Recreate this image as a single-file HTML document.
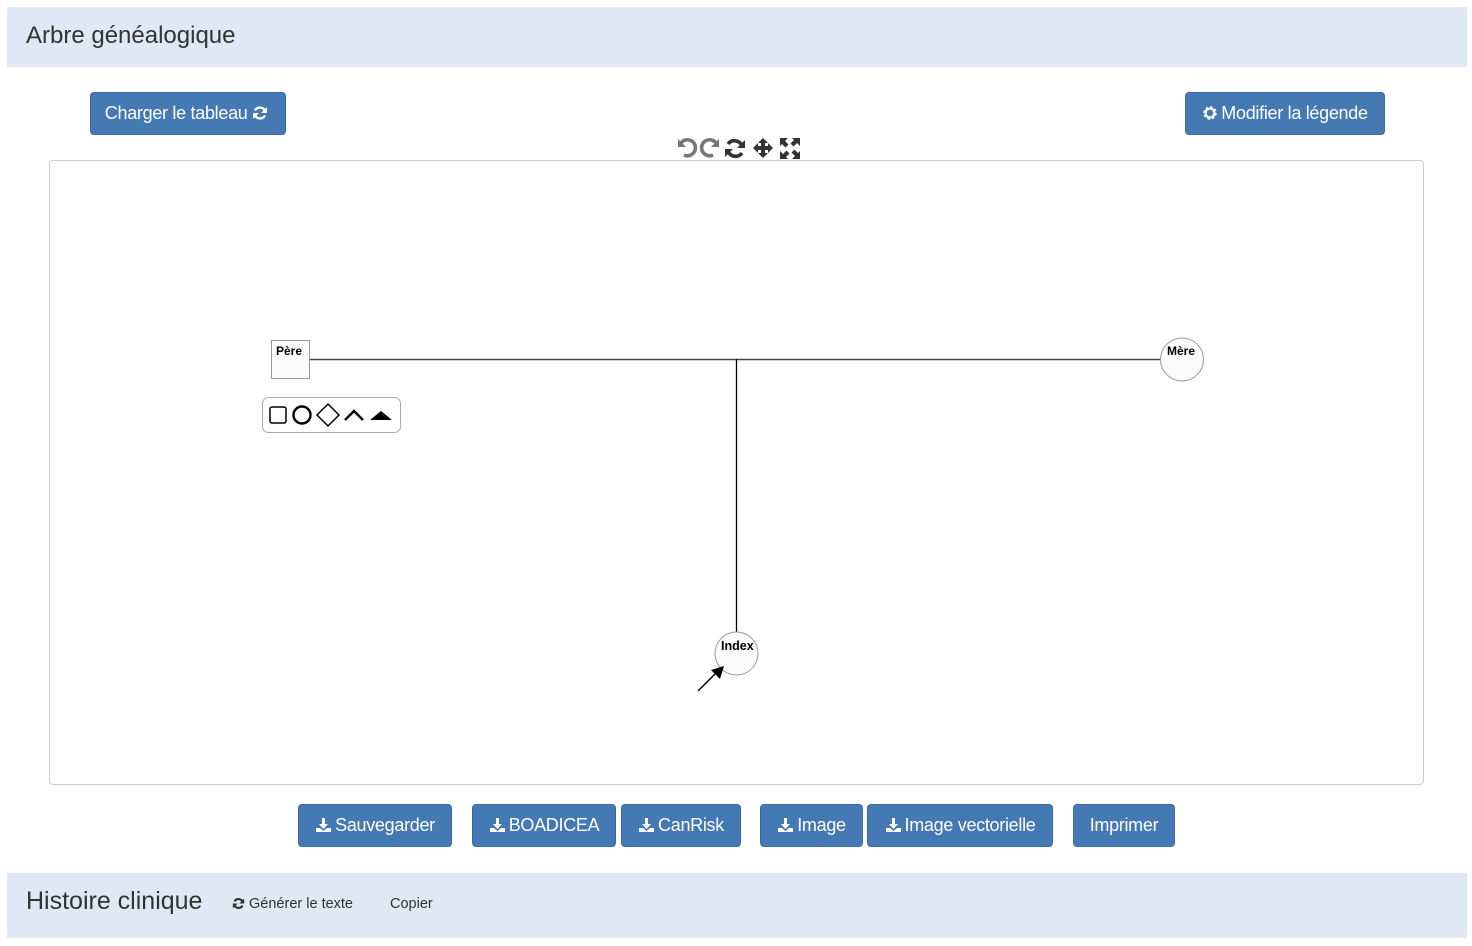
<!DOCTYPE html>
<html><head><meta charset="utf-8"><style>
body{margin:0;width:1472px;height:946px;background:#fff;font-family:"Liberation Sans",sans-serif;position:relative;overflow:hidden}
.abs{position:absolute}
.panel{position:absolute;left:7px;width:1460px;background:#dfe8f4;border-bottom:1px solid #e8e8e8}
.btn{position:absolute;height:43px;background:#4479b4;border:1px solid #3a6ba3;border-radius:4px;color:#fff;font-size:18px;line-height:41px;text-align:center;box-sizing:border-box;letter-spacing:-0.3px;white-space:nowrap}
.btn svg{vertical-align:-2px;margin-right:3px}
</style></head><body>
<div class="panel" style="top:7px;height:59px"><div class="abs" style="left:19px;top:15px;font-size:24px;color:#333">Arbre généalogique</div></div>

<div class="btn" style="left:90px;top:92px;width:196px">Charger le tableau <svg width="16" height="16" viewBox="0 0 16 16"><path d="M13 6A5.5 5.5 0 0 0 3 5.5M3 10a5.5 5.5 0 0 0 10 .5" fill="none" stroke="#fff" stroke-width="2.4"/><path d="M15 2v6H9zM1 14V8h6z" fill="#fff"/></svg></div>
<div class="btn" style="left:1185px;top:92px;width:200px"><svg width="16" height="16" viewBox="0 0 16 16"><circle cx="8" cy="8" r="5" fill="none" stroke="#fff" stroke-width="3.5" stroke-dasharray="2.2 1.7"/><circle cx="8" cy="8" r="4.5" fill="none" stroke="#fff" stroke-width="2"/></svg>Modifier la légende</div>

<svg class="abs" style="left:676px;top:136px" width="126" height="24" viewBox="0 0 126 24">
<g fill="none" stroke-width="3.6"><path d="M5 7a8 8 0 1 1 3 12" stroke="#777"/><path d="M40 7a8 8 0 1 0-3 12" stroke="#777"/></g>
<path d="M2 3v8h8z" fill="#777"/><path d="M43 3v8h-8z" fill="#777"/>
<g fill="none" stroke="#333" stroke-width="3.6"><path d="M66 10a8 8 0 0 0-14-2M52 15a8 8 0 0 0 14 2"/></g>
<path d="M69 4v8h-8zM49 21v-8h8z" fill="#333"/>
<path d="M87 2l5 5h-3v3h3V7l5 5-5 5v-3h-3v3h3l-5 5-5-5h3v-3h-3v3l-5-5 5-5v3h3V7h-3z" fill="#333"/>
<path d="M104 2h8l-3 3 3.5 3.5-3 3L106 8l-2 2zM124 2v8l-3-3-3.5 3.5-3-3L118 4l-2-2zM104 23v-8l3 3 3.5-3.5 3 3L110 21l2 2zM124 23h-8l3-3-3.5-3.5 3-3L122 17l2-2z" fill="#333"/>
</svg>

<div class="abs" style="left:49px;top:160px;width:1373px;height:623px;border:1px solid #ccc;border-radius:4px"></div>
<svg class="abs" style="left:0;top:0" width="1472" height="946">
<line x1="310" y1="359.5" x2="1160" y2="359.5" stroke="#444" stroke-width="1.5"/>
<line x1="736.5" y1="359" x2="736.5" y2="632" stroke="#000" stroke-width="1.3"/>
<rect x="271.5" y="340.5" width="38" height="38" fill="#fbfbfb" stroke="#999"/>
<circle cx="1182" cy="359.5" r="21.5" fill="#fbfbfb" stroke="#999"/>
<circle cx="736.5" cy="653.5" r="21.5" fill="#fbfbfb" stroke="#999"/>
<line x1="698" y1="691" x2="716" y2="673" stroke="#000" stroke-width="1.4"/>
<path d="M724 666l-4 13-9-9z" fill="#000"/>
<text x="276" y="355" font-size="12" font-weight="bold" font-family="Liberation Sans" fill="#000">Père</text>
<text x="1167" y="355" font-size="12" font-weight="bold" font-family="Liberation Sans" fill="#000">Mère</text>
<text x="721" y="650" font-size="12.5" font-weight="bold" font-family="Liberation Sans" fill="#000">Index</text>
<rect x="262.5" y="397.5" width="138" height="35" rx="6" fill="#fff" stroke="#aaa"/>
<rect x="270" y="407" width="16" height="16" rx="2" fill="none" stroke="#000" stroke-width="1.5"/>
<circle cx="302" cy="415" r="8.5" fill="none" stroke="#000" stroke-width="2.4"/>
<path d="M328 404l11 11-11 11-11-11z" fill="none" stroke="#000" stroke-width="1.5"/>
<path d="M345 420l9-9 9 9" fill="none" stroke="#000" stroke-width="2.4"/>
<path d="M370 420l11-9 11 9z" fill="#000"/>
</svg>

<div class="btn" style="left:298px;top:804px;width:154px"><svg width="17" height="16" viewBox="0 0 17 16"><path d="M7 1h3v6h3l-4.5 5L4 7h3z" fill="#fff"/><path d="M1 11h4l3.5 3 3.5-3h4v4H1z" fill="#fff"/></svg>Sauvegarder</div>
<div class="btn" style="left:472px;top:804px;width:144px"><svg width="17" height="16" viewBox="0 0 17 16"><path d="M7 1h3v6h3l-4.5 5L4 7h3z" fill="#fff"/><path d="M1 11h4l3.5 3 3.5-3h4v4H1z" fill="#fff"/></svg>BOADICEA</div>
<div class="btn" style="left:621px;top:804px;width:120px"><svg width="17" height="16" viewBox="0 0 17 16"><path d="M7 1h3v6h3l-4.5 5L4 7h3z" fill="#fff"/><path d="M1 11h4l3.5 3 3.5-3h4v4H1z" fill="#fff"/></svg>CanRisk</div>
<div class="btn" style="left:760px;top:804px;width:103px"><svg width="17" height="16" viewBox="0 0 17 16"><path d="M7 1h3v6h3l-4.5 5L4 7h3z" fill="#fff"/><path d="M1 11h4l3.5 3 3.5-3h4v4H1z" fill="#fff"/></svg>Image</div>
<div class="btn" style="left:867px;top:804px;width:186px"><svg width="17" height="16" viewBox="0 0 17 16"><path d="M7 1h3v6h3l-4.5 5L4 7h3z" fill="#fff"/><path d="M1 11h4l3.5 3 3.5-3h4v4H1z" fill="#fff"/></svg>Image vectorielle</div>
<div class="btn" style="left:1073px;top:804px;width:102px">Imprimer</div>

<div class="panel" style="top:873px;height:64px">
<div class="abs" style="left:19px;top:14px;font-size:25px;color:#333">Histoire clinique</div>
<div class="abs" style="left:225px;top:23px;font-size:14.5px;color:#333"><svg width="13" height="13" viewBox="0 0 16 16" style="vertical-align:-2px"><path d="M13 6A5.5 5.5 0 0 0 3 5.5M3 10a5.5 5.5 0 0 0 10 .5" fill="none" stroke="#333" stroke-width="2.6"/><path d="M15 2v6H9zM1 14V8h6z" fill="#333"/></svg> Générer le texte</div>
<div class="abs" style="left:383px;top:23px;font-size:14.5px;color:#333">Copier</div>
</div>
</body></html>
